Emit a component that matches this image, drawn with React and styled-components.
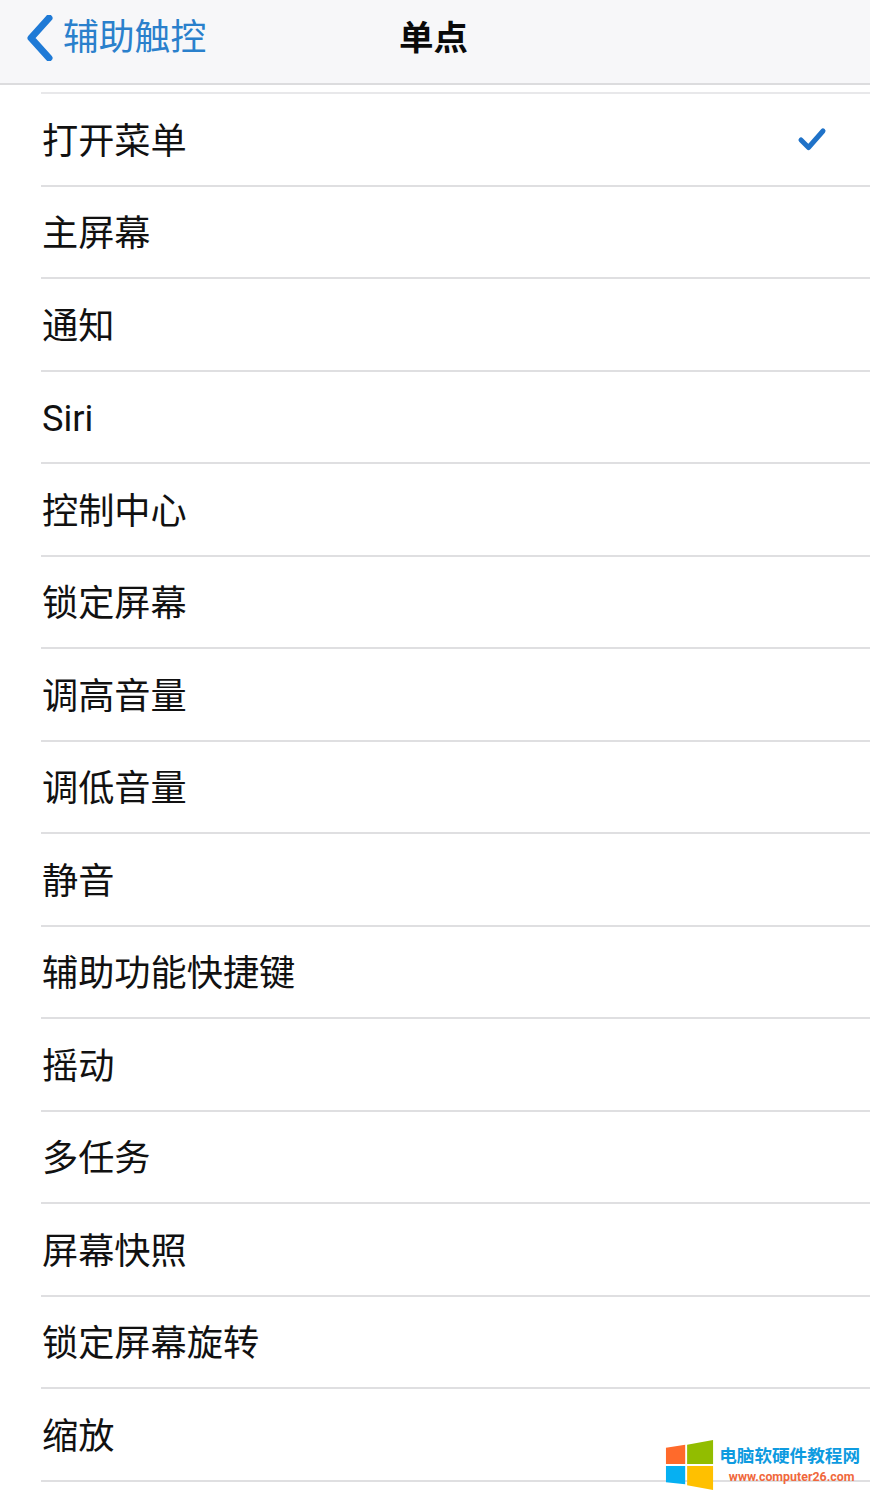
import React from 'react';
import styled, {createGlobalStyle} from 'styled-components';

const GlobalStyle = createGlobalStyle`
	html, body {
		margin: 0;
		padding: 0;
		background: #fff;
	}
	body {
		font-family: 'Roboto', 'Noto Sans CJK SC', sans-serif;
	}
`;

const items = [
	{label: '打开菜单', checked: true},
	{label: '主屏幕'},
	{label: '通知'},
	{label: 'Siri'},
	{label: '控制中心'},
	{label: '锁定屏幕'},
	{label: '调高音量'},
	{label: '调低音量'},
	{label: '静音'},
	{label: '辅助功能快捷键'},
	{label: '摇动'},
	{label: '多任务'},
	{label: '屏幕快照'},
	{label: '锁定屏幕旋转'},
	{label: '缩放'},
];

function App() {
	return (
		<Page>
			<GlobalStyle />
			<NavBar>
				<BackLink>
					<svg width='28' height='46' viewBox='0 0 28 46'>
						<path
							d='M23 3 L5 23 L23 43'
							fill='none'
							stroke='#1f7ad6'
							strokeWidth='7'
							strokeLinecap='round'
							strokeLinejoin='round'
						/>
					</svg>
					<BackLabel>辅助触控</BackLabel>
				</BackLink>
				<Title>单点</Title>
			</NavBar>
			<List>
				{items.map((item) => (
					<Row key={item.label}>
						<RowLabel>{item.label}</RowLabel>
						{item.checked && (
							<CheckIcon width='30' height='26' viewBox='0 0 30 26'>
								<path
									d='M4 14 L11.5 21.5 L26 5'
									fill='none'
									stroke='#1f72c8'
									strokeWidth='5'
									strokeLinecap='round'
									strokeLinejoin='round'
								/>
							</CheckIcon>
						)}
					</Row>
				))}
			</List>
			<Watermark>
				<svg width='50' height='50' viewBox='0 0 52 52'>
					<path d='M1 8 L21 5 L21 25 L1 25 Z' fill='#ff6a2b' />
					<path d='M23 5 L50 0 L50 25 L23 25 Z' fill='#92bd00' />
					<path d='M1 27 L21 27 L21 46 L1 44 Z' fill='#06b0f2' />
					<path d='M23 27 L50 27 L50 52 L23 47 Z' fill='#ffc000' />
				</svg>
				<WatermarkText>
					<WatermarkTitle>电脑软硬件教程网</WatermarkTitle>
					<WatermarkUrl>www.computer26.com</WatermarkUrl>
				</WatermarkText>
			</Watermark>
		</Page>
	);
}

export default App;

// Styled Components
const Page = styled.div`
	position: relative;
	width: 870px;
	height: 1496px;
	overflow: hidden;
	background: #fff;
`;

const NavBar = styled.header`
	box-sizing: border-box;
	height: 85px;
	padding: 0 0 8px 26px;
	background: #f7f7f9;
	border-bottom: 2px solid #dcdcde;
	display: grid;
	grid-template-columns: 373px auto;
	align-items: center;
`;

const BackLink = styled.div`
	display: flex;
	align-items: center;
	gap: 9px;
`;

const BackLabel = styled.span`
	font-size: 35.8px;
	line-height: 46px;
	color: #2a80cc;
`;

const Title = styled.h1`
	margin: 0;
	font-size: 34.5px;
	line-height: 46px;
	font-weight: 700;
	color: #0a0a0a;
`;

const List = styled.div`
	box-sizing: border-box;
	margin-top: 7px;
	margin-left: 41px;
	border-top: 2px solid #e8e8ea;
`;

const Row = styled.div`
	box-sizing: border-box;
	height: 92.5px;
	padding: 5px 43px 0 1px;
	border-bottom: 2px solid #dfdfe1;
	display: flex;
	align-items: center;
	justify-content: space-between;
`;

const RowLabel = styled.span`
	font-size: 36.2px;
	line-height: 46px;
	color: #111;
`;

const CheckIcon = styled.svg`
	margin-bottom: 5px;
`;

const Watermark = styled.div`
	position: absolute;
	right: 10px;
	bottom: 6px;
	display: flex;
	align-items: center;
	gap: 4px;
`;

const WatermarkText = styled.div`
	display: flex;
	flex-direction: column;
	align-items: center;
	gap: 2px;
	margin-bottom: 2px;
`;

const WatermarkTitle = styled.span`
	font-size: 17.6px;
	line-height: 22px;
	font-weight: 700;
	color: #0e9be0;
	white-space: nowrap;
`;

const WatermarkUrl = styled.span`
	margin-left: 4px;
	font-size: 12.4px;
	line-height: 15px;
	font-weight: 700;
	color: #f0683c;
	white-space: nowrap;
`;
